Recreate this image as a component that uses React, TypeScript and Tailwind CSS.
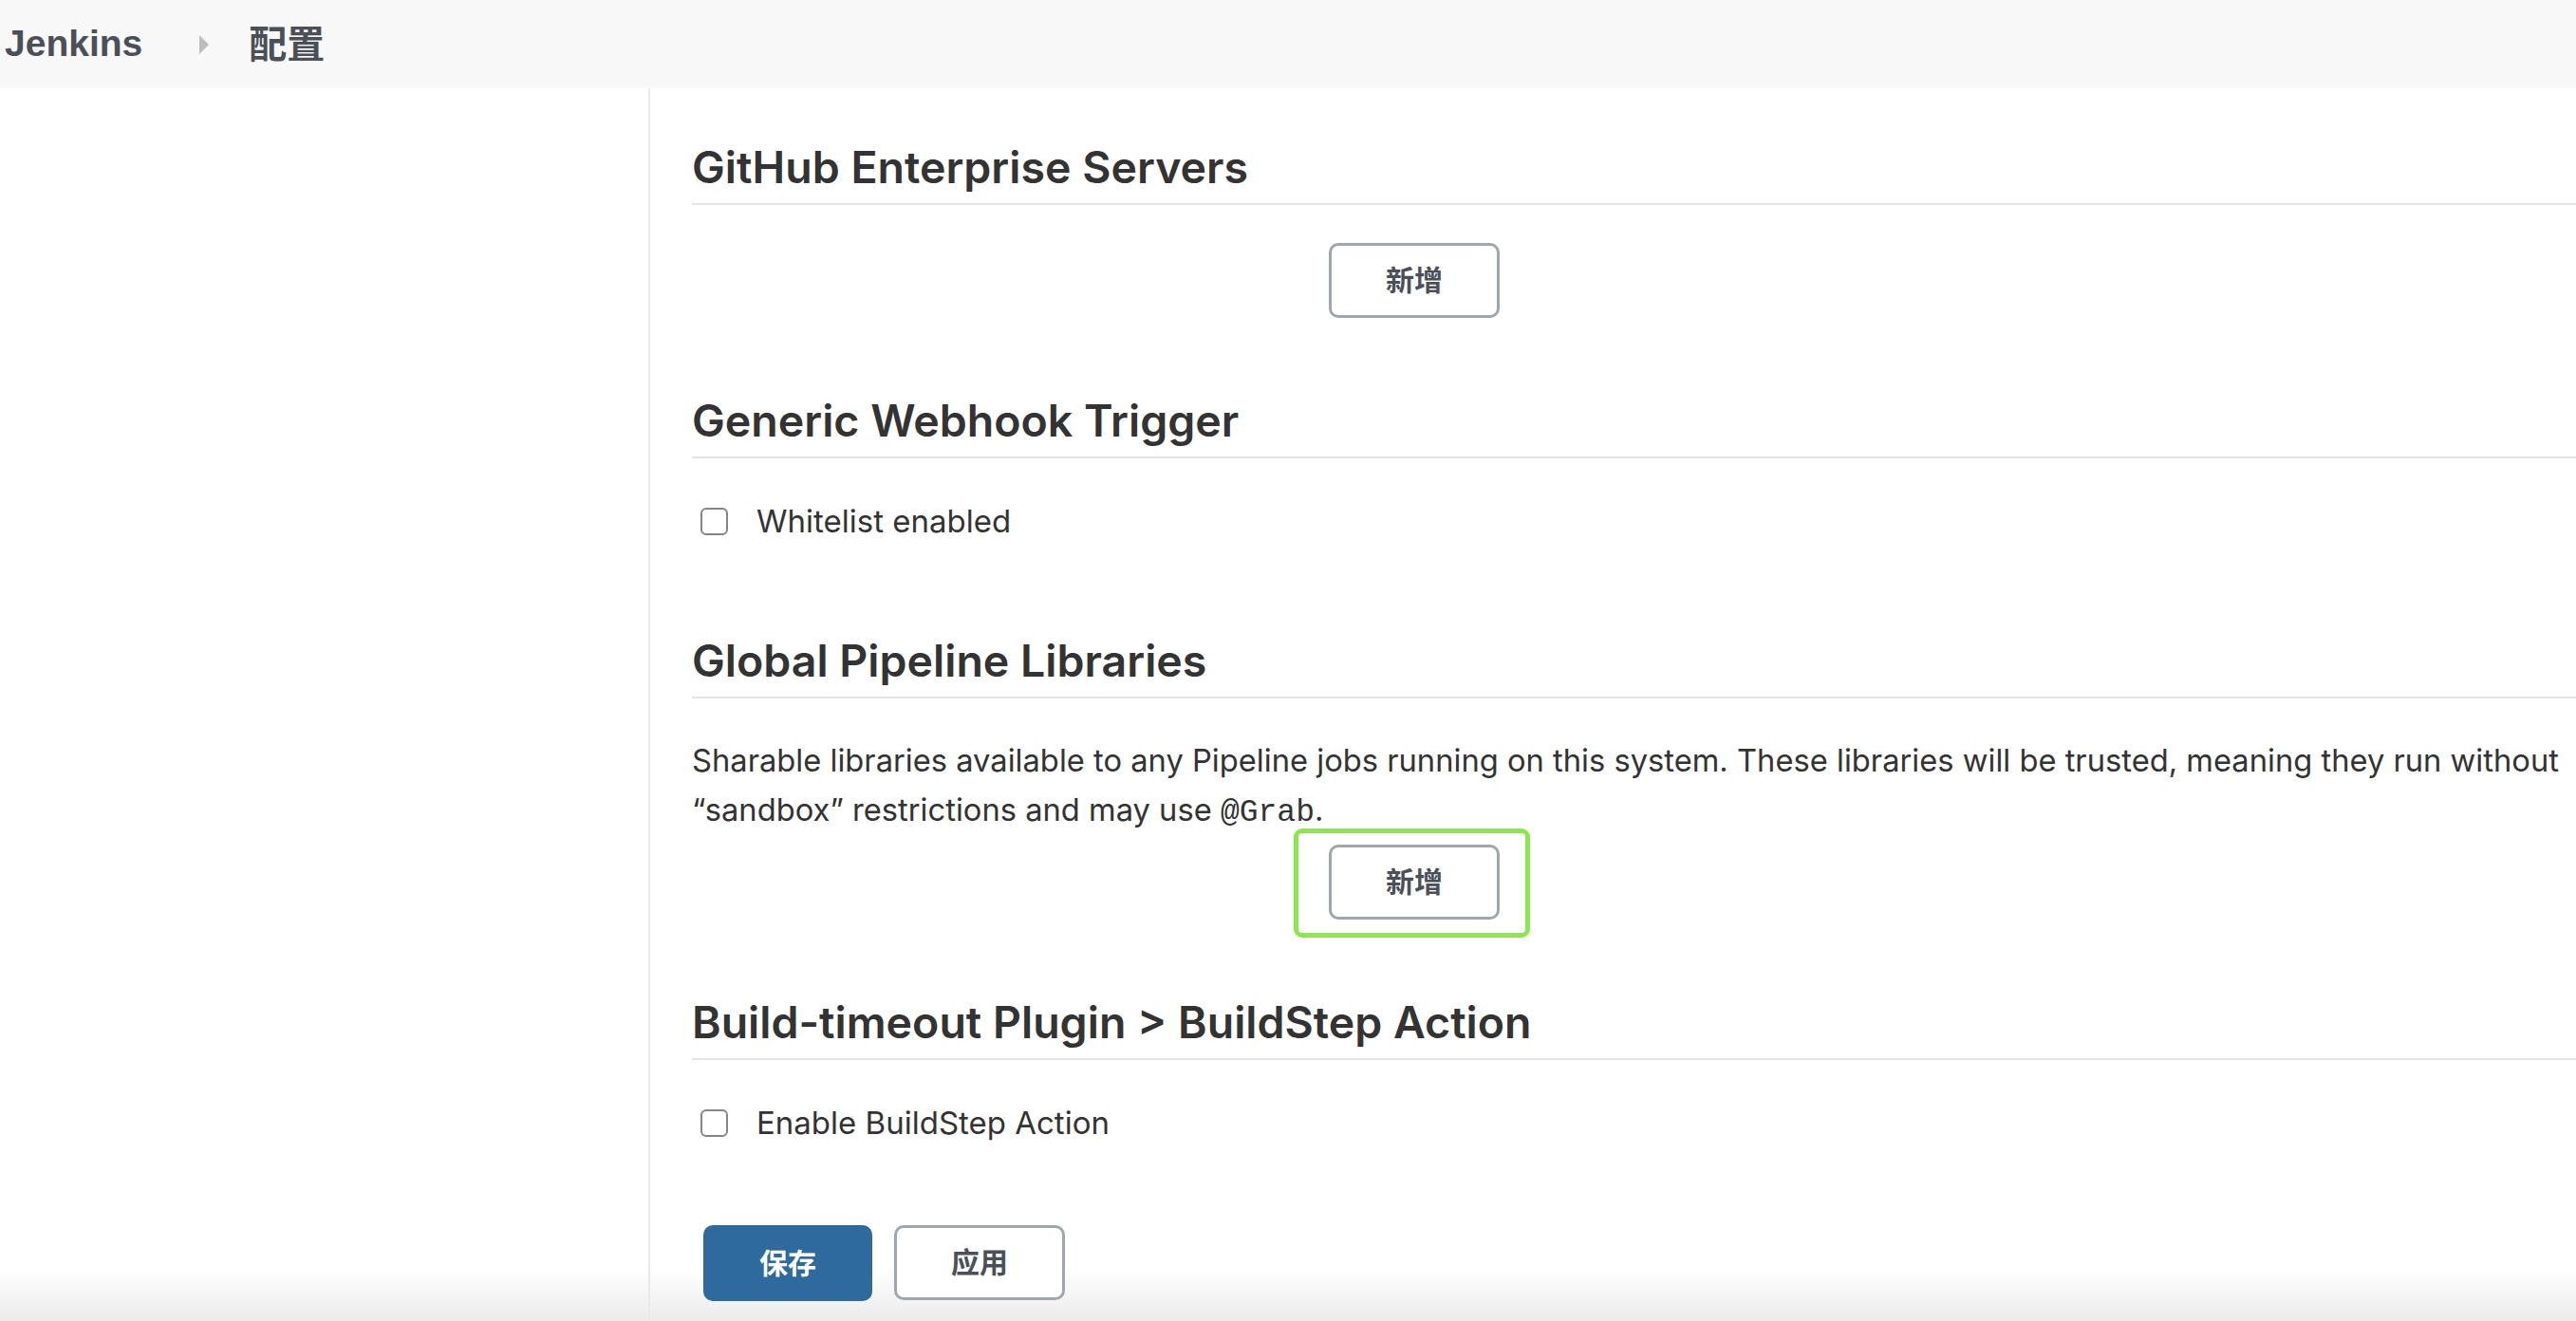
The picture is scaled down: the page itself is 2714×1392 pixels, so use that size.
import React from 'react';

const cjk = { fontFamily: 'Inter, "Noto Sans CJK SC", sans-serif' };

function SectionTitle({ children }: { children: React.ReactNode }) {
    return (
        <h2 className="border-b-2 border-[#e3e3e3] pb-[11px] text-[46.5px] font-semibold leading-[53px] text-[#333]">
            {children}
        </h2>
    );
}

function OutlineButton({ label }: { label: string }) {
    return (
        <button
            type="button"
            className="flex h-[79px] w-[180px] items-center justify-center rounded-[10px] border-[3px] border-[#9ea7ae] bg-white text-[30px] font-bold text-[#4b5058]"
            style={cjk}
        >
            {label}
        </button>
    );
}

function CheckRow({ label }: { label: string }) {
    return (
        <label className="ml-[9px] flex items-center gap-[30px]">
            <span className="block h-[29px] w-[29px] rounded-[6px] border-2 border-[#858585] bg-white" />
            <span className="text-[33px] leading-[40px] text-[#333]">{label}</span>
        </label>
    );
}

export default function App() {
    return (
        <div className="relative h-[1392px] w-full overflow-hidden bg-white" style={{ fontFamily: 'Inter, sans-serif' }}>
            {/* bottom fade of the sticky bar, behind the page content */}
            <div className="pointer-events-none absolute bottom-0 left-0 h-[56px] w-full bg-gradient-to-b from-white/0 to-[#ebebeb]" />

            {/* Breadcrumb bar */}
            <header className="relative flex h-[93px] items-center bg-[#f8f8f8] pl-[5px]">
                <span className="text-[39px] font-bold text-[#4b5058]" style={{ fontFamily: '"Liberation Sans", Arial, sans-serif' }}>
                    Jenkins
                </span>
                <svg className="ml-[60px]" width="10" height="20" viewBox="0 0 10 20">
                    <path d="M0 0 L10 10 L0 20 Z" fill="#bdbdbd" />
                </svg>
                <span className="ml-[42px] text-[40px] font-bold text-[#4b5058]" style={cjk}>
                    配置
                </span>
            </header>

            <div className="relative flex">
                <aside className="h-[1299px] w-[685px] shrink-0 border-r-2 border-[#e9e9eb]" />

                <main className="w-[2100px] shrink-0 pl-[44px] pt-[57px]">
                    {/* GitHub Enterprise Servers */}
                    <SectionTitle>GitHub Enterprise Servers</SectionTitle>
                    <div className="ml-[671px] mt-[40px]">
                        <OutlineButton label="新增" />
                    </div>

                    {/* Generic Webhook Trigger */}
                    <div className="mt-[82px]">
                        <SectionTitle>Generic Webhook Trigger</SectionTitle>
                    </div>
                    <div className="mt-[46px]">
                        <CheckRow label="Whitelist enabled" />
                    </div>

                    {/* Global Pipeline Libraries */}
                    <div className="mt-[101px]">
                        <SectionTitle>Global Pipeline Libraries</SectionTitle>
                    </div>
                    <p className="mt-[39px] w-[2040px] text-[32.7px] leading-[52px] text-[#333]">
                        Sharable libraries available to any Pipeline jobs running on this system. These libraries will be trusted, meaning they run without
                        “sandbox” restrictions and may use{' '}
                        <code className="text-[33px]" style={{ fontFamily: '"Liberation Mono", monospace' }}>@Grab</code>.
                    </p>
                    <div className="relative ml-[671px] mt-[7px] w-[180px]">
                        <OutlineButton label="新增" />
                        <div className="pointer-events-none absolute -left-[37px] -top-[17px] h-[115px] w-[249px] rounded-[9px] border-[5px] border-[#8ae84a]" />
                    </div>

                    {/* Build-timeout Plugin */}
                    <div className="mt-[82px]">
                        <SectionTitle>Build-timeout Plugin &gt; BuildStep Action</SectionTitle>
                    </div>
                    <div className="mt-[46px]">
                        <CheckRow label="Enable BuildStep Action" />
                    </div>

                    {/* Save / Apply */}
                    <div className="ml-[12px] mt-[88px] flex gap-[23px]">
                        <button
                            type="button"
                            className="flex h-[80px] w-[178px] items-center justify-center rounded-[10px] bg-[#2f6a9e] text-[30px] font-bold text-white"
                            style={cjk}
                        >
                            保存
                        </button>
                        <OutlineButton label="应用" />
                    </div>
                </main>
            </div>
        </div>
    );
}
